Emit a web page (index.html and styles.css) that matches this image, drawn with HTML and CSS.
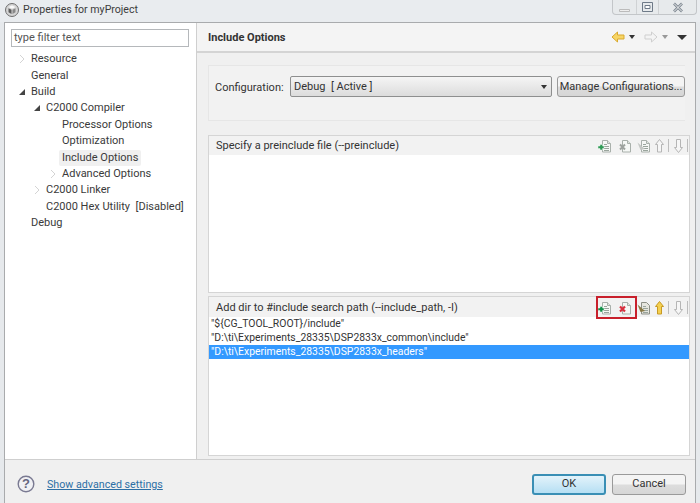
FILE: index.html
```html
<!DOCTYPE html>
<html lang="en">
<head>
<meta charset="utf-8">
<title>Properties for myProject</title>
<link rel="stylesheet" href="styles.css">
</head>
<body>
<svg class="defs" width="0" height="0">
  <defs>
    <g id="doc"><path d="M5.5 2.5H10.5L13.5 5.5V14H5.5Z" fill="#f6f8f6" stroke="#a9b0ab"/><path d="M10.5 2.5V5.5H13.5" fill="#dfe5df" stroke="#a9b0ab"/></g>
    <g id="lines"><path d="M7 6.5H10M7 8.5H12M7 10.5H12M7 12.5H12" stroke="#9aa59d"/></g>
    <g id="up"><path d="M5.5 1.5L9.5 6.5H7.5V14H3.5V6.5H1.5Z" stroke-linejoin="round"/></g>
    <g id="down"><path d="M3.5 1.5H7.5V9.5H9.5L5.5 14.5L1.5 9.5H3.5Z" stroke-linejoin="round"/></g>
  </defs>
</svg>
<div class="titlebar">
  <svg class="app-icon" width="16" height="16" viewBox="0 0 16 16"><circle cx="8" cy="8" r="6.5" fill="#d4d4d4" stroke="#6f6f6f"/><path d="M4.5 5L8 3.5L11.5 5L8 6.8Z" fill="#fafafa"/><path d="M4.5 6.2L7.5 7.8V12L4.5 10.3Z" fill="#5d5d5d"/><path d="M11.5 6.2L8.5 7.8V12L11.5 10.3Z" fill="#888"/></svg>
  <span class="title">Properties for myProject</span>
  <div class="winctl">
    <span class="wbtn min"><svg width="11" height="6" viewBox="0 0 11 6"><path d="M.5 3.5H10.5V5.5H.5Z" fill="#eee" stroke="#bbb"/></svg></span>
    <span class="wbtn max"><svg width="11" height="10" viewBox="0 0 11 10"><path d="M.5.5H10.5V9.5H.5Z" fill="none" stroke="#6e7a88"/><path d="M3 3.5H8V6.5H3Z" fill="#fff" stroke="#6e7a88"/></svg></span>
    <span class="wbtn close"><svg width="12" height="11" viewBox="0 0 12 11"><path d="M2 1.5L10 9.5M10 1.5L2 9.5" stroke="#7d8791" stroke-width="2.6"/><path d="M2 1.5L10 9.5M10 1.5L2 9.5" stroke="#f3f3f3" stroke-width="1"/></svg></span>
  </div>
</div>
<div class="frame">
  <div class="main">
    <aside class="left">
      <div class="filter">type filter text</div>
      <ul class="tree">
        <li class="lv0"><i class="tw closed"></i>Resource</li>
        <li class="lv0"><i class="tw"></i>General</li>
        <li class="lv0"><i class="tw open"></i>Build</li>
        <li class="lv1"><i class="tw open"></i>C2000 Compiler</li>
        <li class="lv2"><i class="tw"></i>Processor Options</li>
        <li class="lv2"><i class="tw"></i>Optimization</li>
        <li class="lv2"><i class="tw"></i><span class="cur">Include Options</span></li>
        <li class="lv2"><i class="tw closed"></i>Advanced Options</li>
        <li class="lv1"><i class="tw closed"></i>C2000 Linker</li>
        <li class="lv1"><i class="tw"></i>C2000 Hex Utility&nbsp; [Disabled]</li>
        <li class="lv0"><i class="tw"></i>Debug</li>
      </ul>
    </aside>
    <section class="right">
      <header class="phead">
        <h1>Include Options</h1>
        <div class="nav">
          <svg width="14" height="12" viewBox="0 0 14 12"><path d="M6.5 1L1 6L6.5 11V8H13V4H6.5Z" fill="#f7d565" stroke="#d9a92e"/></svg>
          <i class="caret dark"></i>
          <svg class="back" width="14" height="12" viewBox="0 0 14 12"><path d="M7.5 1L13 6L7.5 11V8H1V4H7.5Z" fill="#f4f4f4" stroke="#cfcfcf"/></svg>
          <i class="caret grey"></i>
          <i class="caret big"></i>
        </div>
      </header>
      <div class="pbody">
        <div class="cfg">
          <label>Configuration:</label>
          <div class="combo"><span>Debug&nbsp; [ Active ]</span><i class="caret dark"></i></div>
          <div class="btn manage">Manage Configurations...</div>
        </div>
        <div class="group g1">
          <div class="ghead">
            <span>Specify a preinclude file (--preinclude)</span>
            <div class="tools">
              <svg width="16" height="16" viewBox="0 0 16 16"><use href="#doc"/><use href="#lines"/><path d="M3 6.5H5.5V8H7V10.5H5.5V12H3V10.5H1V8H3Z" fill="#2f9a55" stroke="#e9f5ec" stroke-width=".5"/></svg>
              <svg width="16" height="16" viewBox="0 0 16 16"><use href="#doc"/><path d="M3 6.5L8 11.5M8 6.5L3 11.5" stroke="#9ea39f" stroke-width="2"/></svg>
              <svg class="third" width="16" height="16" viewBox="0 0 16 16"><use href="#doc"/><use href="#lines"/><path d="M1.5 4.5L9 11L4.5 12Z" fill="#c4c7c4"/></svg>
              <span class="arrow"><svg width="12" height="16" viewBox="0 0 12 16"><use href="#up" fill="#f6f6f6" stroke="#b5b5b5"/></svg><b></b></span>
              <span class="arrow"><svg width="12" height="16" viewBox="0 0 12 16"><use href="#down" fill="#f6f6f6" stroke="#b5b5b5"/></svg><b></b></span>
            </div>
          </div>
          <div class="glist"></div>
        </div>
        <div class="group g2">
          <div class="ghead">
            <span>Add dir to #include search path (--include_path, -I)</span>
            <div class="tools">
              <span class="mark">
                <svg width="16" height="16" viewBox="0 0 16 16"><use href="#doc"/><use href="#lines"/><path d="M3 6.5H5.5V8H7V10.5H5.5V12H3V10.5H1V8H3Z" fill="#12904a" stroke="#e9f5ec" stroke-width=".5"/></svg>
                <svg width="16" height="16" viewBox="0 0 16 16"><use href="#doc"/><path d="M3 6.5L8 11.5M8 6.5L3 11.5" stroke="#d8303f" stroke-width="2.2"/></svg>
              </span>
              <svg class="third" width="16" height="16" viewBox="0 0 16 16"><path d="M5.5 2.5H10.5L13.5 5.5V14H5.5Z" fill="#e6e6df" stroke="#8d8f86"/><use href="#lines"/><path d="M1.5 4.5L9 11L4.5 12Z" fill="#8a7a45"/></svg>
              <span class="arrow"><svg width="12" height="16" viewBox="0 0 12 16"><use href="#up" fill="#f5d04f" stroke="#c79a25"/></svg><b></b></span>
              <span class="arrow"><svg width="12" height="16" viewBox="0 0 12 16"><use href="#down" fill="#f6f6f6" stroke="#b5b5b5"/></svg><b></b></span>
            </div>
          </div>
          <div class="glist">
            <div class="row">"${CG_TOOL_ROOT}/include"</div>
            <div class="row">"D:\ti\Experiments_28335\DSP2833x_common\include"</div>
            <div class="row sel">"D:\ti\Experiments_28335\DSP2833x_headers"</div>
          </div>
        </div>
      </div>
    </section>
  </div>
  <footer class="foot">
    <svg class="help" width="18" height="18" viewBox="0 0 18 18"><circle cx="9" cy="9" r="7.8" fill="#f1f1f4" stroke="#7a7a92" stroke-width="1.4"/><text x="9" y="13.2" text-anchor="middle" class="qm">?</text></svg>
    <a class="link">Show advanced settings</a>
    <div class="btn ok">OK</div>
    <div class="btn cancel">Cancel</div>
  </footer>
</div>
</body>
</html>
```
FILE: styles.css
```css
* { box-sizing: border-box; }
html, body { margin: 0; padding: 0; }
body {
  width: 700px; height: 503px; overflow: hidden;
  background: #e6e9ec;
  font: 11px/14px Roboto, "Noto Sans", sans-serif;
  color: #333;
}
.defs { position: absolute; }
.titlebar { height: 22px; display: flex; align-items: flex-start; padding-left: 4px; background: #e9ecef; }
.app-icon { margin-top: 2px; }
.title { margin: 3px 0 0 3px; color: #3c3c3c; font-size: 10.6px; }
.winctl {
  margin-left: auto; margin-right: 3px; display: flex; height: 15px;
  border: 1px solid #c3c6c9; border-top: 0; border-radius: 0 0 4px 4px; background: #e7eaec;
}
.wbtn { display: flex; align-items: center; justify-content: center; height: 14px; }
.min { width: 24px; padding-top: 4px; border-right: 1px solid #cfd2d4; }
.max { width: 22px; border-right: 1px solid #cfd2d4; }
.close { width: 37px; }
.frame { margin: 0 4px; height: 481px; border: 1px solid #a9abad; border-bottom: 0; background: #f0f0f0; display: flex; flex-direction: column; }
.main { display: flex; height: 437px; border-bottom: 1px solid #cfcfcf; }
.left { width: 192px; background: #fff; padding: 6px 6px 0 6px; border-right: 1px solid #cfcfcf; }
.filter { width: 178px; height: 18px; border: 1px solid #b5b8bb; padding: 1px 2px; color: #555; background: #fff; }
.tree { list-style: none; margin: 4px 0 0; padding: 0; }
.tree li { height: 16.4px; line-height: 16px; display: flex; align-items: center; color: #3a3a3a; white-space: nowrap; }
.lv0 { padding-left: 4px; }
.lv1 { padding-left: 19px; }
.lv2 { padding-left: 35px; }
.tw { width: 10px; height: 8px; margin-right: 6px; flex: none; position: relative; }
.closed::before { content: ""; position: absolute; left: 5px; top: 0; border-left: 4px solid #fff; border-top: 4px solid transparent; border-bottom: 4px solid transparent; filter: drop-shadow(0 0 .6px #555); }
.open::before { content: ""; position: absolute; left: 4px; top: 1px; border-left: 6px solid transparent; border-bottom: 6px solid #444; }
.cur { background: #f0f0f0; border-radius: 2px; padding: 0 3px; margin-left: -3px; }
.right { flex: 1; min-width: 0; display: flex; flex-direction: column; }
.phead { height: 30px; display: flex; align-items: center; padding: 2px 8px 0 11px; border-bottom: 2px solid #d4d4d4; background: #f4f4f4; }
.phead h1 { margin: 0; font-size: 11px; font-weight: 700; color: #333; }
.nav { margin-left: auto; margin-bottom: 2px; display: flex; align-items: center; gap: 4px; }
.nav .back { margin-left: 5px; }
.nav .big { margin-left: 5px; border-left-width: 5px; border-right-width: 5px; border-top-width: 5px; }
.caret { display: block; width: 0; height: 0; border-left: 3.5px solid transparent; border-right: 3.5px solid transparent; border-top: 4px solid #333; }
.caret.grey { border-top-color: #999; }
.pbody { flex: 1; min-height: 0; padding: 12px 5px 0 11px; display: flex; flex-direction: column; }
.cfg { height: 56px; margin-right: 5px; padding-top: 10px; display: flex; align-items: flex-start; border: 1px solid #e6e6e6; border-width: 1px 0 1px 1px; background: #f2f2f2; }
.cfg label { width: 81px; padding: 5px 0 0 6px; color: #333; }
.combo { width: 262px; height: 21px; border: 1px solid #8e8f8f; border-radius: 2px; background: linear-gradient(#f5f5f5, #dcdcdc); display: flex; align-items: center; justify-content: space-between; padding: 0 4px 0 3px; }
.btn { display: flex; align-items: center; justify-content: center; border: 1px solid #9a9a9a; border-radius: 3px; background: linear-gradient(#f4f4f4 45%, #dcdcdc 55%, #d6d6d6); color: #333; }
.manage { width: 128px; height: 21px; margin-left: 5px; padding-top: 1px; white-space: nowrap; }
.group { border: 1px solid #d5d5d5; display: flex; flex-direction: column; }
.g1 { height: 158px; margin-top: 14px; }
.g2 { height: 160px; margin-top: 3px; }
.ghead { flex: none; display: flex; align-items: center; padding: 0 1px 0 7px; background: #f2f2f2; color: #333; }
.g1 .ghead { height: 19px; }
.g2 .ghead { height: 20px; padding-top: 1px; }
.tools { margin-left: auto; display: flex; align-items: center; gap: 4px; }
.third { margin: 0 -2px 0 -1px; }
.mark { display: flex; gap: 4px; position: relative; }
.mark::after { content: ""; position: absolute; left: -1px; right: -4px; top: -4px; bottom: -3px; border: 2px solid #c8202c; }
.arrow { display: flex; align-items: center; gap: 2px; }
.arrow b { width: 1px; height: 13px; background: #bdbdbd; }
.glist { flex: 1; background: #fff; }
.row { height: 14px; line-height: 13px; padding-left: 2px; color: #333; font-size: 10.4px; white-space: nowrap; }
.sel { background: #3399ff; color: #fff; }
.foot { flex: 1; display: flex; align-items: center; padding: 5px 9px 0 12px; }
.help { flex: none; }
.qm { font: 700 13px "Liberation Sans", sans-serif; fill: #66667e; }
.link { margin-left: 12px; padding-top: 1px; font-size: 10.7px; color: #2d6fa5; text-decoration: underline; }
.ok { margin-left: auto; width: 74px; height: 21px; border-color: #3a8fb5; border-width: 2px; background: linear-gradient(#e3f3fb, #b6dff3); }
.cancel { margin-left: 6px; width: 74px; height: 21px; }
```
